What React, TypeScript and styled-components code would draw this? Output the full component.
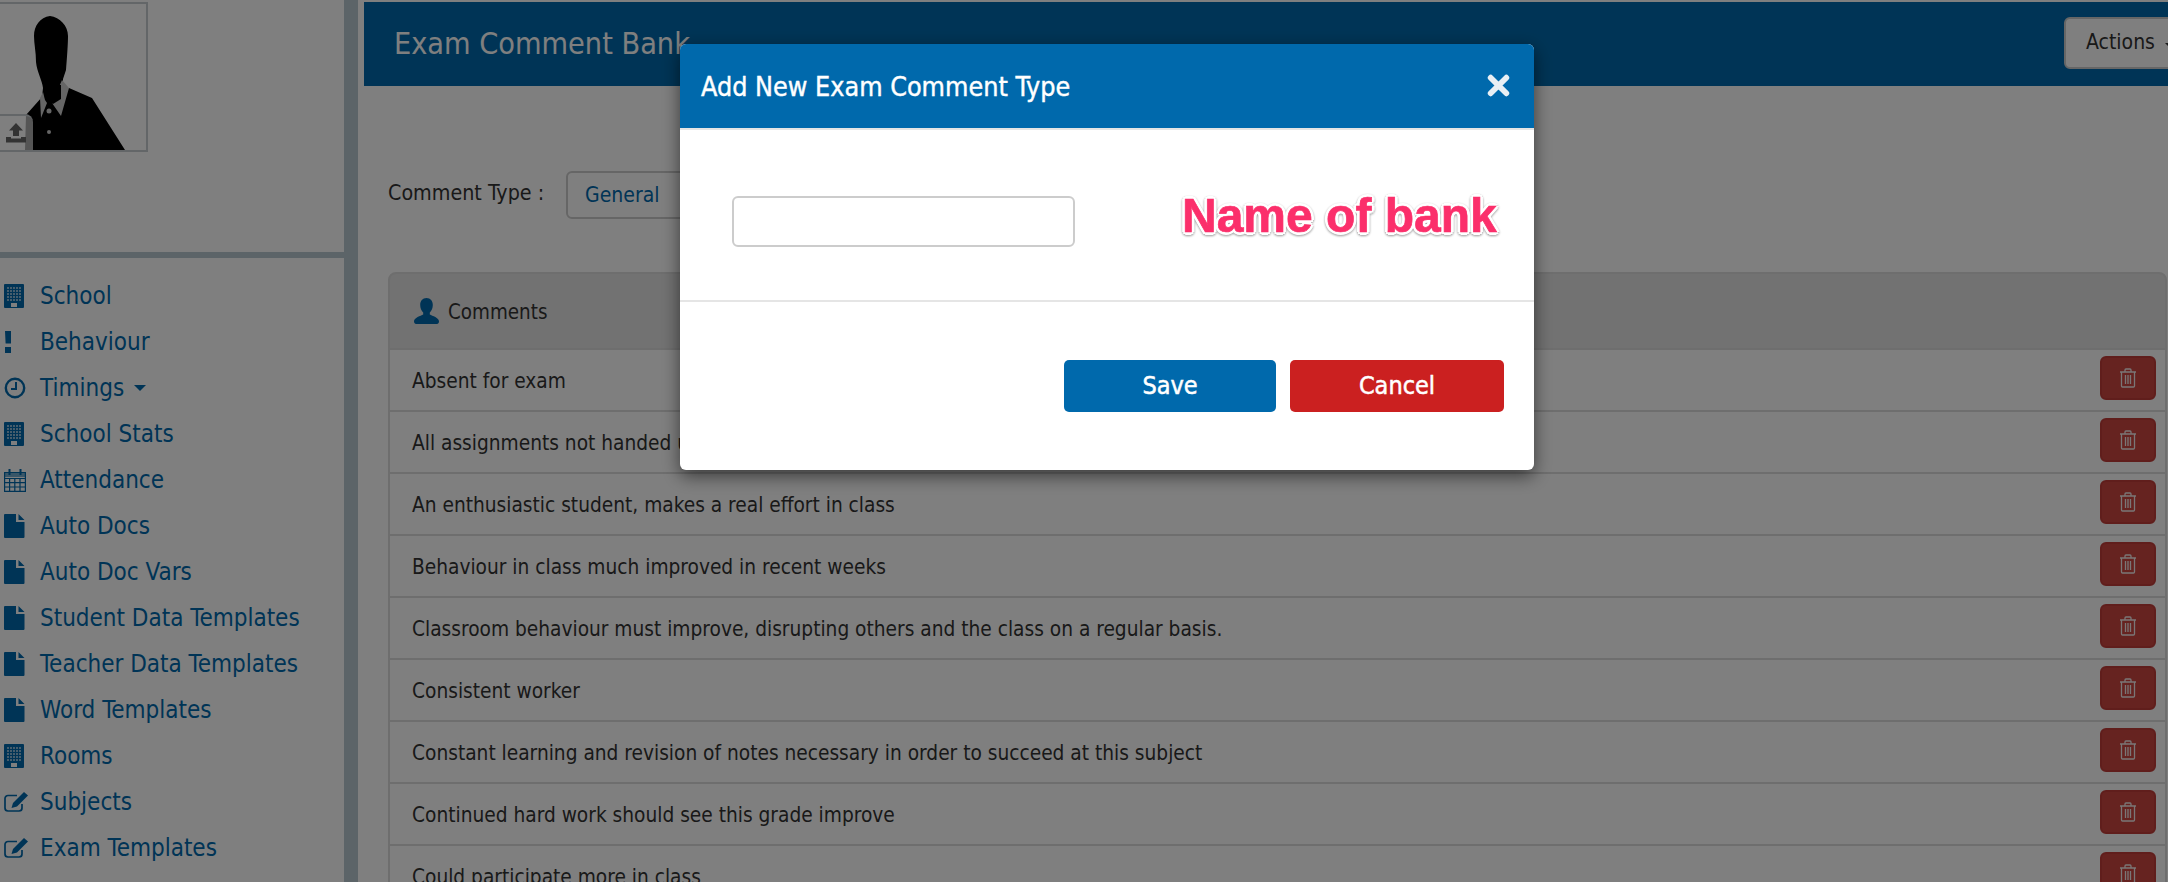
import React from "react";
import styled, { createGlobalStyle } from "styled-components";

const Global = createGlobalStyle`
  html, body { margin: 0; padding: 0; height: 882px; overflow: hidden; background: #fff; }
  body { font-family: "DejaVu Sans Condensed", "DejaVu Sans", "Liberation Sans", sans-serif; font-stretch: condensed; }
  * { box-sizing: border-box; }
`;

const Page = styled.div`
  display: grid;
  grid-template-columns: 344px 14px 1fr;
  height: 882px;
  overflow: hidden;
`;
const Sidebar = styled.aside`display: flex; flex-direction: column;`;
const Splitter = styled.div`background: #b8c8d0;`;
const ProfileArea = styled.div`
  height: 258px;
  padding-top: 2px;
  border-bottom: 6px solid #b8c8d0;
  flex: none;
`;
const Avatar = styled.div`
  position: relative;
  width: 150px;
  height: 150px;
  margin-left: -2px;
  border: 2px solid #c6ccd0;
  overflow: hidden;
`;
const AvatarArt = styled.svg`display: block; width: 146px; height: 146px;`;
const UploadTab = styled.div`
  position: absolute;
  left: 0;
  bottom: 0;
  width: 33px;
  height: 36px;
  padding: 7px 0 0 6px;
  background: rgba(255, 255, 255, 0.67);
  border-top: 2px solid #c6ccd0;
  border-top-right-radius: 8px;
  color: #666;
`;
const Nav = styled.nav`
  display: flex;
  flex-direction: column;
  padding-top: 15px;
`;
const NavItem = styled.a`
  height: 46px;
  display: flex;
  align-items: center;
  color: #0069ac;
  font-size: 24px;
  white-space: nowrap;
`;
const NavIcon = styled.span`
  width: 40px;
  padding-left: 4px;
  display: flex;
  align-items: center;
  flex: none;
`;
const Caret = styled.span<{ $color?: string }>`
  display: inline-block;
  margin-left: 10px;
  border-left: 6px solid transparent;
  border-right: 6px solid transparent;
  border-top: 6px solid ${(p) => p.$color ?? "currentColor"};
`;
const Main = styled.main`padding: 2px 0 0 6px; min-width: 0;`;
const TitleBar = styled.header`
  height: 84px;
  background: #0069ac;
  display: flex;
  align-items: center;
  justify-content: space-between;
  padding-left: 30px;
  overflow: hidden;
`;
const PageTitle = styled.h1`
  margin: 0 0 2px;
  font-size: 30.3px;
  font-weight: 400;
  color: #fff;
`;
const ActionsButton = styled.button`
  flex: none;
  width: 110px;
  height: 52px;
  margin: 0 -6px 2px 0;
  background: #fff;
  border: 2px solid #ccc;
  border-radius: 6px;
  color: #333;
  font: inherit;
  font-size: 21px;
  text-align: left;
  padding: 0 0 2px 20px;
  white-space: nowrap;
`;
const FilterRow = styled.div`
  display: flex;
  align-items: center;
  height: 48px;
  margin: 85px 0 0 24px;
`;
const FilterLabel = styled.label`
  width: 178px;
  margin-top: -5px;
  font-size: 21.3px;
  color: #333;
`;
const TypeSelect = styled.div`
  width: 300px;
  height: 48px;
  border: 2px solid #ccc;
  border-radius: 6px;
  color: #0069ac;
  font-size: 21px;
  display: flex;
  align-items: center;
  padding-left: 17px;
`;
const Panel = styled.section`margin: 53px 1px 0 24px;`;
const PanelHead = styled.div`
  height: 78px;
  background: #e4e4e4;
  border: 2px solid #dcdcdc;
  border-radius: 8px 8px 0 0;
  display: flex;
  align-items: center;
  padding-left: 24px;
  gap: 9px;
  color: #333;
  font-size: 20.4px;
`;
const HeadLabel = styled.span`margin-top: 2px;`;
const Row = styled.div`
  height: 62px;
  background: #fff;
  border: 2px solid #ddd;
  border-top: 0;
  display: flex;
  align-items: center;
  justify-content: space-between;
  padding: 1px 9px 0 22px;
  color: #333;
  font-size: 20.7px;
`;
const DeleteButton = styled.button`
  width: 56px;
  height: 44px;
  margin-bottom: 5px;
  border: 2px solid #c03c38;
  border-radius: 6px;
  background: #cc4640;
  display: flex;
  align-items: center;
  justify-content: center;
  padding: 0;
  color: #f4eeee;
`;
const Backdrop = styled.div`
  position: fixed;
  inset: 0;
  background: rgba(0, 0, 0, 0.5);
`;
const Modal = styled.div`
  position: fixed;
  left: 680px;
  top: 44px;
  width: 854px;
  height: 426px;
  background: #fff;
  border-radius: 6px;
  box-shadow: 0 6px 18px rgba(0, 0, 0, 0.55);
  overflow: hidden;
`;
const ModalHead = styled.div`
  height: 86px;
  background: #0069ac;
  border-bottom: 2px solid #e5e5e5;
  display: flex;
  align-items: center;
  justify-content: space-between;
  padding: 0 24px 2px 21px;
  color: #fff;
`;
const ModalTitle = styled.h2`
  margin: 2px 0 0;
  font-size: 26.7px;
  font-weight: 400;
  -webkit-text-stroke: 0.4px #fff;
`;
const CloseIcon = styled.svg`display: block; width: 23px; height: 23px;`;
const ModalBody = styled.div`
  height: 172px;
  border-bottom: 2px solid #e5e5e5;
  display: flex;
  align-items: flex-start;
  padding: 66px 0 0 52px;
`;
const NameInput = styled.input`
  width: 343px;
  height: 51px;
  border: 2px solid #ccc;
  border-radius: 6px;
  background: #fff;
  flex: none;
`;
const Annotation = styled.span`
  margin: -15px 0 0 107px;
  font-family: "Liberation Sans", Arial, sans-serif;
  font-stretch: normal;
  font-size: 48px;
  font-weight: 700;
  line-height: 70px;
  color: #fb2f6b;
  white-space: nowrap;
  -webkit-text-stroke: 0.7px #fb2f6b;
  text-shadow:
    3px 0 0 #fff, -3px 0 0 #fff, 0 3px 0 #fff, 0 -3px 0 #fff,
    2px 2px 0 #fff, -2px 2px 0 #fff, 2px -2px 0 #fff, -2px -2px 0 #fff;
  filter: drop-shadow(0.5px 1.5px 1px rgba(0, 0, 0, 0.4));
`;
const ModalFooter = styled.div`
  display: flex;
  justify-content: flex-end;
  gap: 14px;
  padding: 58px 30px 0 0;
`;
const ModalButton = styled.button<{ $tone: "save" | "cancel" }>`
  width: ${(p) => (p.$tone === "save" ? 212 : 214)}px;
  height: 52px;
  padding: 0 0 2px;
  border: 0;
  border-radius: 5px;
  background: ${(p) => (p.$tone === "save" ? "#0069ac" : "#cb2020")};
  color: #fff;
  font: inherit;
  font-size: 25px;
  -webkit-text-stroke: 0.5px #fff;
`;

const Building = () => (
  <svg width="20" height="24" viewBox="0 0 20 24">
    <path fill="currentColor" fillRule="evenodd" d="M0 1a1 1 0 0 1 1-1h18a1 1 0 0 1 1 1v22a1 1 0 0 1-1 1H1a1 1 0 0 1-1-1zM7 19v4h6v-4z" />
    {[3, 6, 9, 12, 15].map((x) =>
      [3, 6, 9, 12, 15].map((y) => (
        <rect key={`${x}-${y}`} x={x} y={y} width="2" height="2" fill="#fff" opacity=".55" />
      ))
    )}
  </svg>
);
const Bang = () => (
  <svg width="20" height="24" viewBox="0 0 20 24">
    <path fill="currentColor" d="M1 1h6v12.500H1.600zM1 17h6v6H1z" />
  </svg>
);
const Clock = () => (
  <svg width="22" height="22" viewBox="0 0 22 22" fill="none" stroke="currentColor">
    <circle cx="11" cy="11" r="9.200" strokeWidth="2.400" />
    <path d="M12 5v7H7" strokeWidth="2" />
  </svg>
);
const Calendar = () => (
  <svg width="22" height="24" viewBox="0 0 22 24" fill="none" stroke="currentColor">
    <path strokeWidth="1.200" d="M.6 4.500h20.800v18.900H.6zM.6 10.500h20.800M.6 14.700h20.800M.6 19h20.800M5.600 10.500v13M10.800 10.500v13M16 10.500v13" />
    <path fill="currentColor" strokeWidth="0" d="M0 4h22v5H0z" opacity=".55" />
    <path strokeWidth="2" d="M5.500 1v6M16.500 1v6" />
  </svg>
);
const FileIcon = () => (
  <svg width="21" height="24" viewBox="0 0 21 24">
    <path fill="currentColor" d="M0 1a1 1 0 0 1 1-1h11v8h8.500v15a1 1 0 0 1-1 1H1a1 1 0 0 1-1-1zM14.500 0l6 6h-6z" />
  </svg>
);
const EditIcon = () => (
  <svg width="24" height="20" viewBox="0 0 24 20" fill="none">
    <path stroke="currentColor" strokeWidth="1.700" d="M13 3.500H4a3 3 0 0 0-3 3V16a3 3 0 0 0 3 3h11a3 3 0 0 0 3-3v-4" />
    <path fill="currentColor" d="M20 0l4 3.500-11 11-5.500 1.500 1.500-5z" />
  </svg>
);
const Trash = () => (
  <svg width="18" height="20" viewBox="0 0 18 20" fill="none" stroke="currentColor" strokeWidth="1.300">
    <path d="M1 4h16M6 4V2a1 1 0 0 1 1-1h4a1 1 0 0 1 1 1v2M2.500 4v14a1 1 0 0 0 1 1h11a1 1 0 0 0 1-1V4M6.500 7v9M9 7v9M11.500 7v9" />
  </svg>
);
const UserIcon = () => (
  <svg width="25" height="26" viewBox="0 0 25 26">
    <path fill="#0069ac" d="M12.500 0c4 0 6.300 3 6.300 7 0 3-1.200 6-3 7.500v2c2.500 1.500 9.200 3 9.200 7 0 1.500-1 2.500-2 2.500H2c-1 0-2-1-2-2.500 0-4 6.700-5.500 9.200-7v-2c-1.800-1.500-3-4.500-3-7.500 0-4 2.300-7 6.300-7z" />
  </svg>
);
const Upload = () => (
  <svg width="20" height="20" viewBox="0 0 20 20">
    <path fill="currentColor" d="M10 0l7 7.500h-4V13H7V7.500H3zM0 14h5v1.500h10V14h5v5.500H0z" />
  </svg>
);

const navItems: { label: string; icon: React.ReactNode; caret?: boolean }[] = [
  { label: "School", icon: <Building /> },
  { label: "Behaviour", icon: <Bang /> },
  { label: "Timings", icon: <Clock />, caret: true },
  { label: "School Stats", icon: <Building /> },
  { label: "Attendance", icon: <Calendar /> },
  { label: "Auto Docs", icon: <FileIcon /> },
  { label: "Auto Doc Vars", icon: <FileIcon /> },
  { label: "Student Data Templates", icon: <FileIcon /> },
  { label: "Teacher Data Templates", icon: <FileIcon /> },
  { label: "Word Templates", icon: <FileIcon /> },
  { label: "Rooms", icon: <Building /> },
  { label: "Subjects", icon: <EditIcon /> },
  { label: "Exam Templates", icon: <EditIcon /> },
];

const comments = [
  "Absent for exam",
  "All assignments not handed up on time",
  "An enthusiastic student, makes a real effort in class",
  "Behaviour in class much improved in recent weeks",
  "Classroom behaviour must improve, disrupting others and the class on a regular basis.",
  "Consistent worker",
  "Constant learning and revision of notes necessary in order to succeed at this subject",
  "Continued hard work should see this grade improve",
  "Could participate more in class",
];

export default function App() {
  return (
    <>
      <Global />
      <Page>
        <Sidebar>
          <ProfileArea>
            <Avatar>
              <AvatarArt viewBox="0 0 146 146">
                <g transform="translate(0 -4)">
                  <path
                    fill="#000"
                    d="M50 16C60 17 68 26 68 36C68 44 67 58 66 70L63 79L63 88L69 88L92 98L125 150L25 150L26 115L42 97L43 88C42 80 37 72 36 62C36 52 34 44 34 36C34 26 40 17 50 16Z"
                  />
                  <path fill="#ccc" d="M43 92l2 8 2 3-6 15-1-20zM62 80l7 8-8 28-9-13z" />
                  <path fill="#000" d="M44 85h17v14l-8 5-8-5z" />
                  <circle cx="49" cy="111" r="2.500" fill="#ccc" />
                  <circle cx="49" cy="132" r="2" fill="#ccc" />
                </g>
              </AvatarArt>
              <UploadTab>
                <Upload />
              </UploadTab>
            </Avatar>
          </ProfileArea>
          <Nav>
            {navItems.map((n) => (
              <NavItem key={n.label}>
                <NavIcon>{n.icon}</NavIcon>
                {n.label}
                {n.caret && <Caret />}
              </NavItem>
            ))}
          </Nav>
        </Sidebar>
        <Splitter />
        <Main>
          <TitleBar>
            <PageTitle>Exam Comment Bank</PageTitle>
            <ActionsButton>
              Actions
              <Caret $color="#333" />
            </ActionsButton>
          </TitleBar>
          <FilterRow>
            <FilterLabel>Comment Type :</FilterLabel>
            <TypeSelect>General</TypeSelect>
          </FilterRow>
          <Panel>
            <PanelHead>
              <UserIcon />
              <HeadLabel>Comments</HeadLabel>
            </PanelHead>
            {comments.map((c) => (
              <Row key={c}>
                {c}
                <DeleteButton aria-label="Delete">
                  <Trash />
                </DeleteButton>
              </Row>
            ))}
          </Panel>
        </Main>
      </Page>
      <Backdrop />
      <Modal>
        <ModalHead>
          <ModalTitle>Add New Exam Comment Type</ModalTitle>
          <CloseIcon viewBox="0 0 22 22">
            <path stroke="#e8eff4" strokeWidth="5.500" strokeLinecap="round" d="M3.500 3.500l15 15M18.500 3.500l-15 15" />
          </CloseIcon>
        </ModalHead>
        <ModalBody>
          <NameInput />
          <Annotation>Name of bank</Annotation>
        </ModalBody>
        <ModalFooter>
          <ModalButton $tone="save">Save</ModalButton>
          <ModalButton $tone="cancel">Cancel</ModalButton>
        </ModalFooter>
      </Modal>
    </>
  );
}
